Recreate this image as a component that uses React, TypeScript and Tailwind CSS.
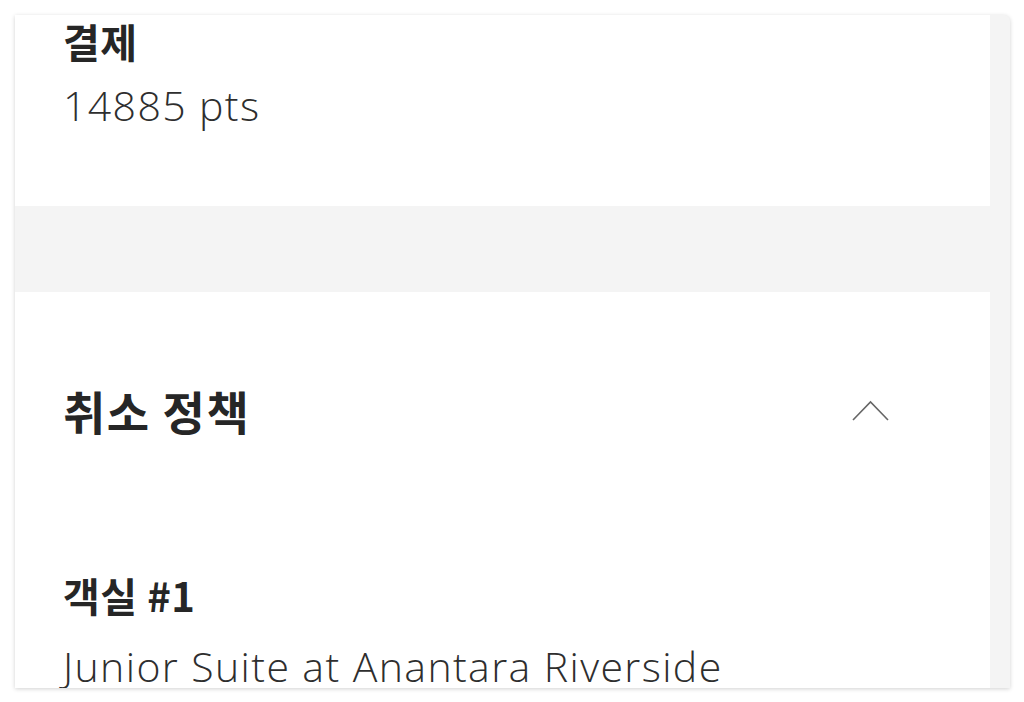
export default function App() {
  const kr = { fontFamily: '"Noto Sans CJK KR", "Noto Sans", sans-serif' };
  const body = { fontFamily: '"Open Sans", "Noto Sans CJK KR", sans-serif' };

  return (
    <div className="w-[1024px] h-[702px] bg-white pt-[15px] pl-[15px] overflow-hidden">
      <div className="w-[995px] h-[673px] bg-[#f4f4f4] rounded-tr-[6px] shadow-[0_1px_4px_rgba(0,0,0,0.18)] overflow-hidden">
        <div className="w-[975px] flex flex-col">
          {/* payment */}
          <section className="bg-white h-[191px] pl-[48px] pt-[1px]">
            <h3 className="text-[40px] leading-[50px] font-bold tracking-[0.5px] text-[#262626]" style={kr}>
              결제
            </h3>
            <p className="text-[41px] leading-[50px] font-light tracking-[1.4px] text-[#2e2e2e] mt-[14px]" style={body}>
              14885 pts
            </p>
          </section>

          <div className="h-[86px]" />

          {/* cancellation policy */}
          <section className="bg-white h-[396px] pl-[48px] pr-[101px] pt-[88px]">
            <div className="flex items-center justify-between">
              <h2 className="text-[46px] leading-[60px] font-bold tracking-[1.5px] text-[#262626]" style={kr}>
                취소 정책
              </h2>
              <svg width="37" height="21" viewBox="0 0 37 21" fill="none">
                <polyline points="1,20 18.5,2 36,20" stroke="#666" strokeWidth="1.6" />
              </svg>
            </div>
            <h3 className="text-[40px] leading-[46px] font-bold tracking-[0.5px] text-[#262626] mt-[132px]" style={kr}>
              객실 #1
            </h3>
            <p className="text-[41px] leading-[50px] font-light tracking-[1.4px] text-[#2e2e2e] mt-[23px]" style={body}>
              Junior Suite at Anantara Riverside
            </p>
          </section>
        </div>
      </div>
    </div>
  );
}
